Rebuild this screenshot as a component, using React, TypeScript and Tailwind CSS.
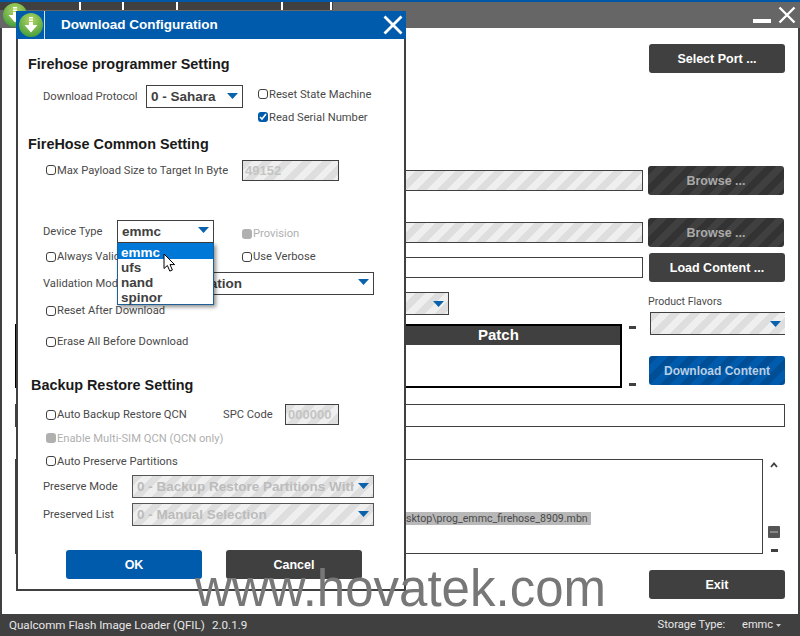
const label = "font-['Roboto',sans-serif] text-[11.2px] leading-none text-[#4a4a4a] whitespace-nowrap";
const heading = "font-['Liberation_Sans',sans-serif] font-bold text-[14.4px] leading-none text-[#1a1a1a] whitespace-nowrap";
const stripes = "bg-[repeating-linear-gradient(135deg,#dedede_0,#dedede_7px,#efefef_7px,#efefef_14px)]";
const darkStripes = "bg-[repeating-linear-gradient(135deg,#333333_0,#333333_7px,#404040_7px,#404040_14px)]";
const blueStripes = "bg-[repeating-linear-gradient(135deg,#004f96_0,#004f96_7px,#005bac_7px,#005bac_14px)]";

function Arrow() {
  return (
    <svg width="11" height="6" viewBox="0 0 11 6" className="shrink-0">
      <path d="M0 0h11L5.5 6z" fill="#0a62ad" />
    </svg>
  );
}

function CheckBox({ text, checked, disabled }: { text: string; checked?: boolean; disabled?: boolean }) {
  return (
    <div className="flex items-center h-[12px]">
      {checked ? (
        <span className="w-[10px] h-[10px] rounded-[3px] bg-[#005bac] flex items-center justify-center">
          <svg width="8" height="8" viewBox="0 0 8 8">
            <path d="M1 4l2 2 4-5" stroke="#fff" strokeWidth="1.6" fill="none" />
          </svg>
        </span>
      ) : disabled ? (
        <span className="w-[10px] h-[10px] rounded-[3px] bg-[#b0b0b0]" />
      ) : (
        <span className="w-[10px] h-[10px] rounded-[3px] border border-[#404040] bg-white" />
      )}
      <span className={`${label} ml-px ${disabled ? "text-[#b0b0b0]!" : ""}`}>{text}</span>
    </div>
  );
}

function Select({ text, className, disabled }: { text: string; className: string; disabled?: boolean }) {
  return (
    <div
      className={`${className} flex items-center justify-between pl-1 pr-[4px] pt-px border font-['Liberation_Sans',sans-serif] font-bold text-[13.5px] overflow-hidden whitespace-nowrap ${
        disabled ? `${stripes} border-[#555] text-[#bcbcbc]` : "bg-white border-[#404040] text-[#404040]"
      }`}
    >
      <span className="overflow-hidden">{text}</span>
      <span className="ml-1 pb-[3px]"><Arrow /></span>
    </div>
  );
}

function AppIcon({ size }: { size: number }) {
  return (
    <svg width={size} height={size} viewBox="0 0 24 24">
      <defs>
        <radialGradient id="ball" cx="50%" cy="30%" r="75%">
          <stop offset="0%" stopColor="#b5d563" />
          <stop offset="100%" stopColor="#3f9a3c" />
        </radialGradient>
      </defs>
      <circle cx="12" cy="12" r="12" fill="url(#ball)" />
      <path d="M10 4h4v1.5h-4zM10 6.5h4V8h-4zM10 9h4v3h4.5L12 19.5 5.5 12H10z" fill="#fff" />
    </svg>
  );
}

function DarkButton({ text, className = "" }: { text: string; className?: string }) {
  return (
    <div className={`w-[136px] h-[29px] pt-px rounded-[3px] bg-[#404040] flex items-center justify-center font-['Liberation_Sans',sans-serif] font-bold text-[12.5px] text-white ${className}`}>
      {text}
    </div>
  );
}

function Dash() {
  return <div className="w-[7px] h-[3px] bg-[#404040]" />;
}

function Dialog() {
  return (
    <div className="absolute left-[16px] top-[11px] w-[390px] h-[580px] bg-white border-2 border-t-0 border-[#404040] flex flex-col">
      <div className="h-[28px] -mx-[2px] bg-[#005bac] flex items-center shrink-0 relative">
        <div className="ml-[3px] w-[24px]"><AppIcon size={24} /></div>
        <div className="ml-[1px] w-px h-full bg-[#cfe3f5]" />
        <span className="ml-[16px] font-['Liberation_Sans',sans-serif] font-bold text-[13.5px] text-white">Download Configuration</span>
        <svg width="20" height="20" viewBox="0 0 20 20" className="ml-auto mr-[3px]">
          <path d="M1.5 1.5l17 17M18.5 1.5l-17 17" stroke="#fff" strokeWidth="2.8" />
        </svg>
      </div>

      <div className="pl-[10px] pt-[18px]">
        <div className={heading}>Firehose programmer Setting</div>
      </div>

      <div className="flex pl-[25px] mt-[14px] h-[52px]">
        <div className={`${label} w-[103px] pt-[6px]`}>Download Protocol</div>
        <Select text="0 - Sahara" className="w-[97px] h-[23px]" />
        <div className="ml-[15px] flex flex-col gap-[11px] pt-[3px]">
          <CheckBox text="Reset State Machine" />
          <CheckBox text="Read Serial Number" checked />
        </div>
      </div>

      <div className={`${heading} pl-[10px]`}>FireHose Common Setting</div>

      <div className="flex items-center pl-[28px] mt-[8px] h-[21px]">
        <div className="w-[196px]"><CheckBox text="Max Payload Size to Target In Byte" /></div>
        <div className={`w-[97px] h-[21px] border border-[#404040] ${stripes} font-['Liberation_Sans',sans-serif] font-bold text-[13px] text-[#c4c4c4] pl-[2px] leading-[19px]`}>49152</div>
      </div>

      <div className="flex pl-[25px] mt-[39px] h-[23px] relative">
        <div className={`${label} w-[74px] pt-[6px]`}>Device Type</div>
        <Select text="emmc" className="w-[97px] h-[23px]" />
        <div className="ml-[28px] pt-[8px]"><CheckBox text="Provision" disabled /></div>
      </div>

      <div className="flex items-center pl-[28px] mt-[8px] h-[12px]">
        <div className="w-[196px]"><CheckBox text="Always Validate" /></div>
        <CheckBox text="Use Verbose" />
      </div>

      <div className="flex items-center pl-[25px] mt-[9px] h-[23px]">
        <div className={`${label} w-[89px]`}>Validation Mode</div>
        <Select text="0 - No Validation" className="w-[242px] h-[23px]" />
      </div>

      <div className="pl-[28px] mt-[10px]"><CheckBox text="Reset After Download" /></div>
      <div className="pl-[28px] mt-[19px]"><CheckBox text="Erase All Before Download" /></div>

      <div className={`${heading} pl-[13px] mt-[30px]`}>Backup Restore Setting</div>

      <div className="flex items-center pl-[28px] mt-[12px] h-[21px]">
        <div className="w-[177px]"><CheckBox text="Auto Backup Restore QCN" /></div>
        <div className={`${label} w-[62px]`}>SPC Code</div>
        <div className={`w-[54px] h-[21px] border border-[#404040] ${stripes} font-['Liberation_Sans',sans-serif] font-bold text-[13px] text-[#c4c4c4] pl-[2px] leading-[19px]`}>000000</div>
      </div>

      <div className="pl-[28px] mt-[7px]"><CheckBox text="Enable Multi-SIM QCN (QCN only)" disabled /></div>
      <div className="pl-[28px] mt-[11px]"><CheckBox text="Auto Preserve Partitions" /></div>

      <div className="flex items-center pl-[25px] mt-[8px] h-[23px]">
        <div className={`${label} w-[89px]`}>Preserve Mode</div>
        <Select text="0 - Backup Restore Partitions With" className="w-[242px] h-[23px]" disabled />
      </div>
      <div className="flex items-center pl-[25px] mt-[5px] h-[23px]">
        <div className={`${label} w-[89px]`}>Preserved List</div>
        <Select text="0 - Manual Selection" className="w-[242px] h-[23px]" disabled />
      </div>

      <div className="flex pl-[48px] gap-[24px] mt-[24px]">
        <div className="w-[136px] h-[29px] pt-px rounded-[3px] bg-[#005bac] flex items-center justify-center font-['Liberation_Sans',sans-serif] font-bold text-[12.5px] text-white">OK</div>
        <DarkButton text="Cancel" />
      </div>

      {/* open dropdown of Device Type */}
      <div className="absolute left-[99px] top-[232px] w-[97px] h-[62px] bg-white border border-t-0 border-[#1d5f96] shadow-[2px_2px_4px_rgba(0,0,0,0.45)] font-['Liberation_Sans',sans-serif] font-bold text-[13.5px] leading-[15px] text-[#404040]">
        <div className="bg-[#0078d7] text-white pl-[3px] h-[16px] leading-[19px]">emmc</div>
        <div className="pl-[3px] pt-px">ufs</div>
        <div className="pl-[3px]">nand</div>
        <div className="pl-[3px]">spinor</div>
      </div>
      <svg width="13" height="20" viewBox="0 0 13 20" className="absolute left-[145px] top-[242px]">
        <path d="M1 1v14.5l3.4-3 2.4 5.6 2.6-1.1-2.4-5.4h4.6z" fill="#fff" stroke="#000" strokeWidth="1" />
      </svg>
    </div>
  );
}

export default function App() {
  return (
    <div className="relative w-[800px] h-[636px] overflow-hidden bg-white flex flex-col font-['Liberation_Sans',sans-serif]">
      <div className="h-[2px] bg-[#0058a8]" />
      <div className="h-[26px] bg-[#666666] flex shrink-0 relative">
        <div className="flex h-[8px] w-[333px] bg-[#404040]">
          <div className="w-[81px] border-r-2 border-white" />
          <div className="w-[43px] border-r-2 border-white" />
          <div className="w-[54px] border-r-2 border-white" />
          <div className="w-[105px] border-r-2 border-white" />
          <div className="w-[49px] border-r-2 border-white" />
        </div>
        <div className="absolute left-[3px] top-[1px]"><AppIcon size={24} /></div>
        <div className="ml-auto flex items-end pr-[4px] gap-[7px]">
          <div className="w-[18px] h-[4px] bg-white mb-[5px]" />
          <svg width="18" height="18" viewBox="0 0 18 18" className="mb-[4px]">
            <path d="M1.5 1.5l15 15M16.5 1.5l-15 15" stroke="#fff" strokeWidth="2.4" />
          </svg>
        </div>
      </div>

      <div className="flex-1 border-x-2 border-[#404040] pl-[13px] pr-[13px] flex flex-col">
        <DarkButton text="Select Port ..." className="self-end mt-[16px]" />

        <div className="flex items-center mt-[93px]">
          <div className={`ml-[380px] w-[248px] h-[21px] border border-[#404040] ${stripes}`} />
          <div className={`ml-[5px] w-[136px] h-[29px] pt-px rounded-[3px] ${darkStripes} flex items-center justify-center font-bold text-[12.5px] text-[#aaaaaa]`}>Browse ...</div>
        </div>
        <div className="flex items-center mt-[23px]">
          <div className={`ml-[380px] w-[248px] h-[21px] border border-[#404040] ${stripes}`} />
          <div className={`ml-[5px] w-[136px] h-[29px] pt-px rounded-[3px] ${darkStripes} flex items-center justify-center font-bold text-[12.5px] text-[#aaaaaa]`}>Browse ...</div>
        </div>
        <div className="flex items-center mt-[6px]">
          <div className="ml-[380px] w-[248px] h-[21px] border border-[#404040]" />
          <DarkButton text="Load Content ..." className="ml-[6px]" />
        </div>

        <div className="flex mt-[10px] h-[32px] relative">
          <div className={`ml-[380px] w-[54px] h-[23px] border border-[#404040] ${stripes} flex items-center justify-end pr-[4px]`}><Arrow /></div>
          <div className="font-['Roboto',sans-serif] text-[10.6px] leading-none text-[#4a4a4a] whitespace-nowrap absolute left-[633px] top-[5px]">Product Flavors</div>
        </div>

        <div className="flex">
          <div className="w-[607px] h-[64px] shrink-0 border-2 border-black flex flex-col">
            <div className="h-[19px] bg-[#404040] flex font-bold text-[15px] leading-[18px] text-white">
              <span className="ml-[461px]">Patch</span>
            </div>
          </div>
          <div className="w-[20px] h-[64px] shrink-0 ml-[7px] flex flex-col justify-between pt-[2px] pb-[2px]">
            <Dash />
            <Dash />
          </div>
          <div className="flex flex-col items-end w-[136px] shrink-0">
            <div className={`w-[135px] h-[23px] border-l border-t border-b border-[#404040] ${stripes} mt-[-12px] flex items-center justify-end pr-[4px]`}><Arrow /></div>
            <div className={`w-[136px] h-[29px] rounded-[3px] ${blueStripes} mt-[21px] flex items-center justify-center font-bold text-[12px] text-[#b8cfe6]`}>Download Content</div>
          </div>
        </div>

        <div className="h-[23px] border border-[#404040] mt-[16px]" />

        <div className="flex mt-[32px]">
          <div className="w-[748px] h-[95px] border border-[#404040] relative shrink-0">
            <span className="absolute left-[390px] top-[52px] h-[13px] w-[185px] bg-[#b8b8b8] font-['Roboto',sans-serif] text-[10.6px] leading-[13px] text-[#4a4a4a] whitespace-nowrap">sktop\prog_emmc_firehose_8909.mbn</span>
          </div>
          <div className="w-[22px] flex flex-col items-center">
            <svg width="8" height="6" viewBox="0 0 8 6" className="mt-[3px]">
              <path d="M1 5l3-3.5L7 5" stroke="#404040" strokeWidth="1.8" fill="none" />
            </svg>
            <div className="w-[12px] h-[12px] rounded-[1px] bg-[#555555] mt-[58px] flex items-center justify-center">
              <div className="w-[8px] h-[2px] bg-[#888888]" />
            </div>
            <div className="mt-[11px]"><Dash /></div>
          </div>
        </div>

        <DarkButton text="Exit" className="self-end mt-[16px]" />
      </div>

      <div className="h-[22px] pt-px bg-[#404040] flex items-center font-['Roboto',sans-serif] text-[11.6px] text-[#e8e8e8] shrink-0">
        <span className="ml-[9px] w-[203px]">Qualcomm Flash Image Loader (QFIL)</span>
        <span>2.0.1.9</span>
        <span className="ml-auto text-[11.2px]">Storage Type:</span>
        <span className="ml-[17px] text-[11px]">emmc</span>
        <svg width="5" height="3" viewBox="0 0 5 3" className="ml-[3px] mr-[19px]">
          <path d="M0 0h5L2.5 3z" fill="#cccccc" />
        </svg>
      </div>

      <Dialog />

      <div className="absolute left-[195px] top-[560px] font-['Liberation_Sans',sans-serif] text-[51px] leading-[58px] text-[#777777] whitespace-nowrap pointer-events-none">www.hovatek.com</div>
    </div>
  );
}
